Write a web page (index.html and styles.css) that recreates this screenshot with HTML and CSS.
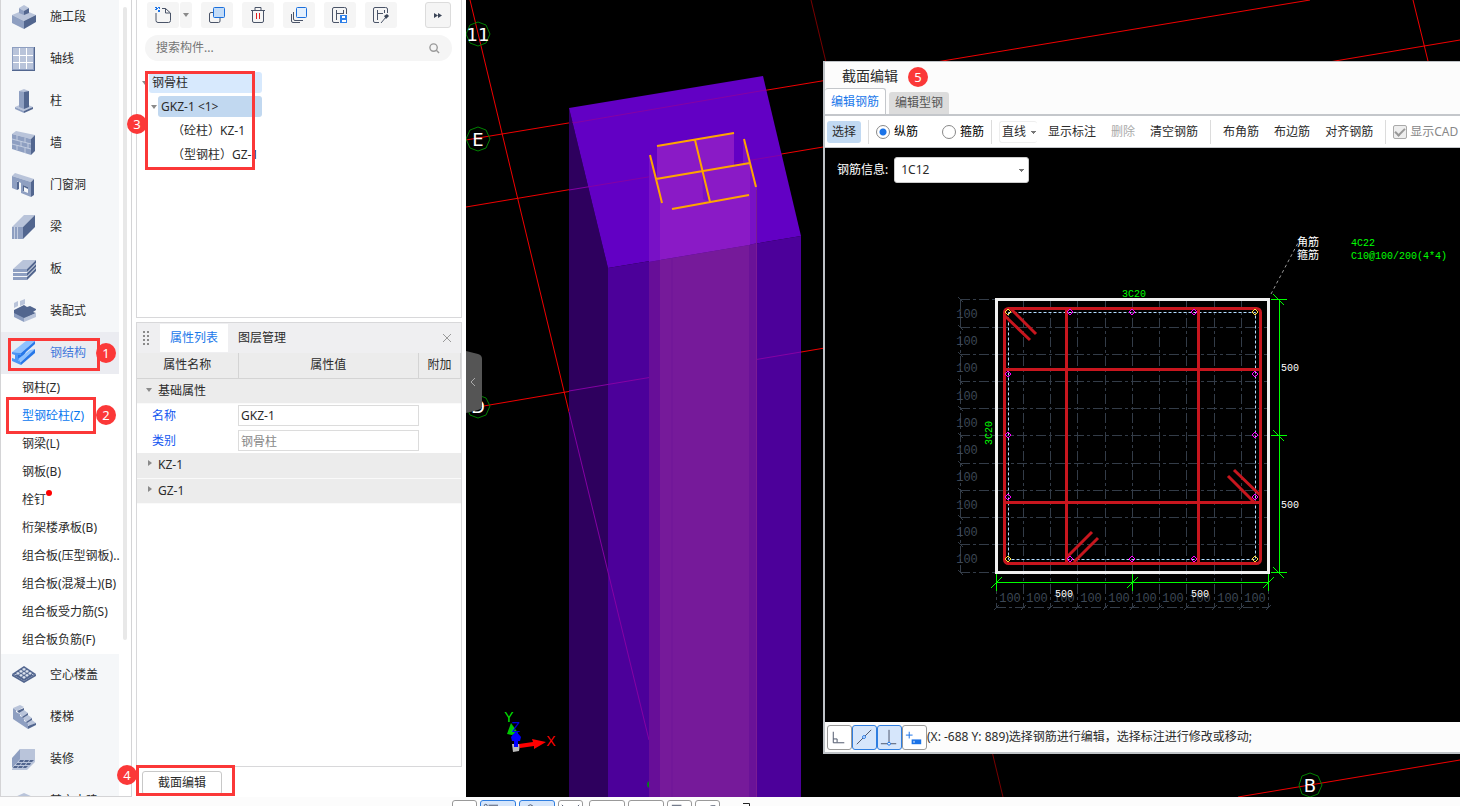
FILE: index.html
```html
<!DOCTYPE html>
<html lang="zh-CN">

<head>
    <meta charset="UTF-8">
    <meta name="viewport" content="width=device-width, initial-scale=1.0">
    <title>截面编辑</title>
    <link rel="stylesheet" href="styles.css">
</head>

<body>
    <div class="workspace">
        <!-- Component navigation -->
        <nav class="sidebar">
            <ul class="nav-list">
                <li><a class="nav-item" href="#">
                    <svg class="nav-icon" viewBox="0 0 24 24"><path class="lt" d="M0 10 12 5 24 10 12 16z"/><path class="md" d="M0 10 12 16V24L0 18z"/><path class="dk" d="M12 16 24 10V17L12 24z"/><path class="lt" d="M7 3 12 0 17 3 12 6z"/><path class="md" d="M7 3 12 6V10L7 8z"/><path class="dk" d="M12 6 17 3V8L12 10z"/></svg>
                    施工段</a></li>
                <li><a class="nav-item" href="#">
                    <svg class="nav-icon" viewBox="0 0 24 24"><path class="dk" d="M0 0H23V24H0z"/><path class="md" d="M0 0H22V23H0z"/><path class="lt" d="M1 1H21V22H1z"/><path class="grid-line" d="M7.500 1V22M14.500 1V22M1 8.500H21M1 15.500H21"/></svg>
                    轴线</a></li>
                <li><a class="nav-item" href="#">
                    <svg class="nav-icon" viewBox="0 0 24 24"><path class="lt" d="M3 18 12 14 21 18 12 22z"/><path class="md" d="M3 18 12 22V24L3 20z"/><path class="dk" d="M12 22 21 18V20L12 24z"/><path class="lt" d="M7 2 12 0 17 2 12 4z"/><path class="md" d="M7 2 12 3V20L7 18z"/><path class="dk" d="M12 3 17 2V18L12 20z"/></svg>
                    柱</a></li>
                <li><a class="nav-item" href="#">
                    <svg class="nav-icon" viewBox="0 0 24 24"><path class="lt" d="M0 3 4 0 23 4 19 8z"/><path class="md" d="M0 3 19 8V24L0 18z"/><path class="dk" d="M19 8 23 4V20L19 24z"/><path class="brick" d="M0 8 19 13M0 13 19 18M5 4V9M13 7V11M9 10V15M16 12V17M5 14V19M13 17V22"/></svg>
                    墙</a></li>
                <li><a class="nav-item" href="#">
                    <svg class="nav-icon" viewBox="0 0 24 24"><path class="lt" d="M0 3 3 0 22 6 19 9z"/><path class="dk" d="M19 9 22 6V22L19 24zM5 9 7 8V16L5 17z"/><path class="md" fill-rule="evenodd" d="M0 3 19 9V24L9 20V10L5 8V17L0 15zM11 12V18L16 20V14z"/><path class="dk" d="M11 12 16 14V16L12 14V18L11 18z"/></svg>
                    门窗洞</a></li>
                <li><a class="nav-item" href="#">
                    <svg class="nav-icon" viewBox="0 0 24 24"><path class="lt" d="M0 12 12 0H23L11 12z"/><path class="md" d="M0 12H11V24H0z"/><path class="dk" d="M11 12 23 0V12L11 24z"/><path class="brick" d="M2.500 12V24M5.500 12V24"/></svg>
                    梁</a></li>
                <li><a class="nav-item" href="#">
                    <svg class="nav-icon" viewBox="0 0 24 24"><path class="lt" d="M1 12 11 3H24L15 12z"/><path class="md" d="M1 12H15V15H1zM1 16H15V19H1zM1 20H15V23H1z"/><path class="dk" d="M15 12 24 3V6L15 15zM15 16 24 7V10L15 19zM15 20 24 11V14L15 23z"/></svg>
                    板</a></li>
                <li><a class="nav-item" href="#">
                    <svg class="nav-icon" viewBox="0 0 24 24"><path class="lt" d="M2 4 6 2V7L2 9zM8 2 13 0V5L8 7z"/><path class="dk" d="M2 11 12 6 15 8 18 7 24 10V11L21 13 24 14 12 20 2 15z"/><path class="md" d="M2 14 12 19V23L2 18z"/><path class="lt" d="M12 19 24 14V18L12 23z"/></svg>
                    装配式</a></li>
                <li>
                    <a class="nav-item nav-active" href="#">
                        <svg class="nav-icon" viewBox="0 0 24 24"><path fill="#8ec2ff" d="M0 11 14 0H23L9 12z"/><path fill="#2777e8" d="M9 12 23 0V3L14 11 8 20 5 18V14z"/><path fill="#4c95f5" d="M0 11 9 12V14L6 14V19L9 21V24L0 20V17L3 18V14L0 13z"/><path fill="#8ec2ff" d="M6 18 18 9 23 8 9 21z"/><path fill="#2777e8" d="M9 21 23 8V12L9 24z"/></svg>
                        钢结构</a>
                    <ul class="sub-list">
                        <li><a href="#">钢柱(Z)</a></li>
                        <li><a class="sub-active" href="#">型钢砼柱(Z)</a></li>
                        <li><a href="#">钢梁(L)</a></li>
                        <li><a href="#">钢板(B)</a></li>
                        <li><a class="has-dot" href="#">栓钉</a></li>
                        <li><a href="#">桁架楼承板(B)</a></li>
                        <li><a href="#">组合板(压型钢板)..</a></li>
                        <li><a href="#">组合板(混凝土)(B)</a></li>
                        <li><a href="#">组合板受力筋(S)</a></li>
                        <li><a href="#">组合板负筋(F)</a></li>
                    </ul>
                </li>
                <li><a class="nav-item" href="#">
                    <svg class="nav-icon" viewBox="0 0 24 24"><path class="dk" d="M0 11 12 18 24 11V13L12 20 0 13z"/><path class="dk" d="M0 11 12 3 24 11 12 18z"/><path fill="#dbe2ee" d="M12 5 14 6 12 8 10 6zM9 7 11 8 9 10 7 8zM15 7 17 8 15 10 13 8zM6 9 8 10 6 12 4 10zM12 9 14 10 12 12 10 10zM18 9 20 10 18 12 16 10zM4 11 5 12 4 12 2 11zM9 11 11 12 9 14 7 12zM15 11 17 12 15 14 13 12zM12 13 14 14 12 16 10 14zM20 11 22 11 20 12z"/></svg>
                    空心楼盖</a></li>
                <li><a class="nav-item" href="#">
                    <svg class="nav-icon" viewBox="0 0 24 24"><path class="md" d="M1 3 4 5V7L8 9V11L12 13V16L16 18V24L1 14z"/><path class="lt" d="M1 3 8 0 12 2 5 6zM7 8 12 5 16 8 10 12zM11 13 16 10 20 13 14 17zM15 18 20 15 24 18 17 21z"/><path class="dk" d="M5 6 12 3V5L7 8zM10 12 16 8V10L11 13zM14 17 20 13V15L15 18zM16 21 24 18V20L16 24z"/></svg>
                    楼梯</a></li>
                <li><a class="nav-item" href="#">
                    <svg class="nav-icon" viewBox="0 0 24 24"><path class="md" d="M0 11 8 2V13L0 21z"/><path class="lt" d="M8 2H23V13H8z"/><path class="lt" d="M0 22 8 12H23V15L15 23H0z"/><path class="dk" d="M8 13H12L11 15H7zM13 13H17L16 15H12zM18 13H22L20 15H17zM5 16H9L8 18H4zM10 16H14L13 18H9zM15 16H19L18 18H14zM2 19H6L5 21H1zM7 19H11L10 21H6zM12 19H16L14 21H11z"/></svg>
                    装修</a></li>
                <li><a class="nav-item" href="#">
                    <svg class="nav-icon" viewBox="0 0 24 24"><path class="lt" d="M3 8 12 4 21 8 12 12z"/><path class="md" d="M3 8 12 12V20L3 16z"/><path class="dk" d="M12 12 21 8V16L12 20z"/></svg>
                    其它土建</a></li>
            </ul>
            <div class="nav-scrollbar"></div>
        </nav>

        <!-- Component list and properties -->
        <section class="panels">
            <div class="panel component-panel">
                <div class="tools">
                    <div class="tool-split">
                        <button class="tool" title="新建"><svg viewBox="0 0 20 20"><path class="ink" d="M3 8V15.500Q3 17.500 5 17.500H15.500Q17.500 17.500 17.500 15.500V8L12.500 3.500H9M12.500 3.500V8H17"/><path fill="#1a73e8" d="M2 2h2v1h1v1H4v1H2V4h1V3H2zM5 2h2v2H6V3H5zM5 5h2v2H5z"/></svg></button>
                        <button class="tool-more" title="更多新建"><i class="arrow-down"></i></button>
                    </div>
                    <button class="tool" title="复制"><svg viewBox="0 0 20 20"><path class="ink" d="M6 7.500H4Q2.500 7.500 2.500 9V16Q2.500 17.500 4 17.500H11.500Q13 17.500 13 16V13"/><rect class="blue" x="6.500" y="2.500" width="11" height="10" rx="1"/></svg></button>
                    <button class="tool" title="删除"><svg viewBox="0 0 20 20"><path class="ink" d="M3 5.500H17M7 5V2.500H13V5M4.500 6V16Q4.500 17.500 6 17.500H14Q15.500 17.500 15.500 16V6"/><path d="M8.500 8V14M11.500 8V14" stroke="#e02020"/></svg></button>
                    <button class="tool" title="层间复制"><svg viewBox="0 0 20 20"><path class="ink" d="M4.500 7V14Q4.500 15.500 6 15.500H14M2.500 9V16Q2.500 17.500 4 17.500H11"/><rect class="blue pale" x="7.500" y="2.500" width="10" height="10" rx="1"/></svg></button>
                    <button class="tool" title="存档"><svg viewBox="0 0 20 20"><path class="ink" d="M9 17.500H4Q2.500 17.500 2.500 16V4Q2.500 2.500 4 2.500H14.500Q16.500 2.500 16.500 4V9M6.500 5V15M13.500 5V9M6.500 8.500H13"/><rect x="10" y="10" width="7" height="8" fill="#2f80e8"/><path d="M12 11H15V13H12zM12 15H16V17H12z" fill="#fff"/></svg></button>
                    <button class="tool" title="提取"><svg viewBox="0 0 20 20"><path class="ink" d="M8 17.500H4Q2.500 17.500 2.500 16V4Q2.500 2.500 4 2.500H14.500Q16.500 2.500 16.500 4V8M6.500 5V15M13.500 5V8M6.500 8.500H12M10 18 15 12"/><path d="M13 11 16 9 18 11 15 14z" fill="#3c4658"/></svg></button>
                    <button class="tool tool-expand" title="展开"><svg viewBox="0 0 20 20"><path d="M6 8 10 10.500 6 13zM10 8 14 10.500 10 13z" fill="#3c4658"/></svg></button>
                </div>
                <div class="search">
                    <input type="text" aria-label="搜索构件" placeholder="搜索构件...">
                    <svg viewBox="0 0 12 12"><circle cx="5" cy="5" r="4"/><path d="M8 8 11 11"/></svg>
                </div>
                <ul class="tree">
                    <li class="tree-row"><i class="arrow-down"></i><span class="node node-root">钢骨柱</span></li>
                    <li class="tree-row level-2"><i class="arrow-down"></i><span class="node node-selected">GKZ-1 &lt;1&gt;</span></li>
                    <li class="tree-row level-3"><span class="node">（砼柱）KZ-1</span></li>
                    <li class="tree-row level-3"><span class="node">（型钢柱）GZ-1</span></li>
                </ul>
            </div>

            <div class="panel property-panel">
                <div class="panel-tabs">
                    <svg class="grip" viewBox="0 0 6 14"><path d="M0 0h2v2H0zM4 0h2v2H4zM0 4h2v2H0zM4 4h2v2H4zM0 8h2v2H0zM4 8h2v2H4zM0 12h2v2H0zM4 12h2v2H4z"/></svg>
                    <button class="panel-tab current">属性列表</button>
                    <button class="panel-tab">图层管理</button>
                    <button class="panel-close" title="关闭"><svg viewBox="0 0 10 10"><path d="M1 1 9 9M9 1 1 9"/></svg></button>
                </div>
                <table class="props">
                    <colgroup><col class="col-name"><col><col class="col-extra"></colgroup>
                    <thead>
                        <tr><th>属性名称</th><th>属性值</th><th>附加</th></tr>
                    </thead>
                    <tbody>
                        <tr class="group"><td colspan="3"><i class="arrow-down"></i>基础属性</td></tr>
                        <tr><td><label for="propName">名称</label></td><td><input id="propName" type="text" value="GKZ-1"></td><td></td></tr>
                        <tr><td><label for="propType">类别</label></td><td><input id="propType" type="text" value="钢骨柱" disabled></td><td></td></tr>
                        <tr class="group"><td colspan="3"><i class="arrow-right"></i>KZ-1</td></tr>
                        <tr class="group"><td colspan="3"><i class="arrow-right"></i>GZ-1</td></tr>
                    </tbody>
                </table>
            </div>
            <div class="panel-footer">
                <button class="section-btn">截面编辑</button>
            </div>
        </section>

        <!-- 3D view -->
        <main class="viewport">
            <svg class="scene" viewBox="466 0 994 797" preserveAspectRatio="xMinYMin slice">
                <g class="axis">
                    <path d="M470 0 569 412M466 140 1310 0M466 207 1460 40M466 409 1460 240M1413 0 1428 61M1238 797 1460 760"/>
                    <path class="axis-dim" d="M811 0 1003 797"/>
                </g>
                <g class="bubble">
                    <path d="M478 22 486 25 490 34 486 43 478 46 470 43 466 34 470 25zM478 127 486 130 490 139 486 148 478 151 470 148 466 139 470 130zM478 395 486 398 490 406 486 415 478 418 470 415 466 406 470 398zM1310 773 1318 776 1322 785 1318 794 1310 797 1302 794 1299 785 1302 776z"/>
                    <text x="478" y="41">11</text>
                    <text x="478" y="146">E</text>
                    <text x="478" y="413">D</text>
                    <text x="1310" y="792">B</text>
                </g>
                <path fill="#2e005e" d="M569 108 608 268V797H569z"/>
                <path fill="#4c009a" d="M608 268 801 236V797H608z"/>
                <path fill="#6200c4" d="M569 108 763 76 801 236 608 268z"/>
                <path class="axis-under" d="M573 123 766 90M569 190 782 155M569 391 801 352M569 412 649 740"/>
                <path fill="#7811c6" d="M649 155 657 180 661 203V260L649 262zM743 140 757 187V243L749 245V170L743 165z"/>
                <path fill="#8a1ac6" d="M657 146 734 133V166L750 164V245L660 260V200L657 185z"/>
                <path fill="#7811c6" d="M695 140 702 167 703 199 710 202 695 140zM734 165 743 163V165L734 167z"/>
                <path fill="#670e98" d="M649 262 660 260V797H649z"/>
                <path fill="#761a9a" d="M660 260 749 245V797H660z"/>
                <path fill="#6a1298" d="M749 245 757 243V797H749z"/>
                <path fill="none" stroke="#6f1598" d="M672 258V797"/>
                <path fill="none" stroke="#7a1c94" d="M756.500 190V797"/>
                <path class="steel" d="M657 146 734 133M656 179 750 163M672 209 749 195M650 155 662 203M744 139 756 187M695 140 710 202"/>
                <path fill="#067a20" d="M649 781V788L647 786V783z"/>
                <path fill="#555" d="M466 351 478 354Q482 355 482 359V405Q482 409 478 410L466 413z"/>
                <path class="collapse-mark" d="M475 378 471 382 475 386"/>
                <g class="compass">
                    <path fill="#00c800" d="M507 734 511 723 518 733 512 735z"/>
                    <path fill="#bbb" d="M512 744H520L519 751 513 752z"/>
                    <path fill="#f00" d="M519 744 533 742 532 739 546 742 534 749 534 746 520 748z"/>
                    <path fill="#0000ff" d="M511 737 516 731 521 737 520 741H518V747H514V741H512z"/>
                    <text x="509" y="722" fill="#00e800">Y</text>
                    <text x="516" y="732" fill="#0000e0">Z</text>
                    <text x="551" y="746" fill="#f00">X</text>
                </g>
            </svg>

            <!-- Section editor -->
            <div class="editor" role="dialog" aria-labelledby="editorTitle">
                <h1 class="editor-title" id="editorTitle">截面编辑</h1>
                <div class="editor-tabs">
                    <button class="editor-tab current">编辑钢筋</button>
                    <button class="editor-tab">编辑型钢</button>
                </div>
                <div class="editor-tools">
                    <button class="text-btn picked">选择</button>
                    <span class="divider"></span>
                    <label class="choice"><input type="radio" name="barType" checked>纵筋</label>
                    <label class="choice choice-last"><input type="radio" name="barType">箍筋</label>
                    <span class="divider"></span>
                    <select class="line-select" aria-label="线型"><option>直线</option></select>
                    <button class="text-btn">显示标注</button>
                    <button class="text-btn" disabled>删除</button>
                    <button class="text-btn">清空钢筋</button>
                    <span class="divider"></span>
                    <button class="text-btn">布角筋</button>
                    <button class="text-btn">布边筋</button>
                    <button class="text-btn">对齐钢筋</button>
                    <span class="divider"></span>
                    <label class="choice cad"><input type="checkbox" checked disabled>显示CAD</label>
                </div>
                <div class="drawing">
                    <svg class="section" viewBox="825 148 635 574" preserveAspectRatio="xMinYMin slice">
                        <g class="grid">
                            <path d="M996.500 299V608M1023.500 299V608M1050.500 299V608M1077.500 299V608M1105.500 299V608M1132.500 299V608M1159.500 299V608M1186.500 299V608M1214.500 299V608M1241.500 299V608M1268.500 299V608"/>
                            <path d="M960 299.500H1268M960 327.500H1268M960 354.500H1268M960 381.500H1268M960 408.500H1268M960 435.500H1268M960 463.500H1268M960 490.500H1268M960 517.500H1268M960 544.500H1268M960 572.500H1268M960.500 299V573M996 607.500H1268"/>
                            <path class="ticks" d="M958 297l5 5M958 325l5 5M958 352l5 5M958 379l5 5M958 406l5 5M958 433l5 5M958 461l5 5M958 488l5 5M958 515l5 5M958 542l5 5M958 570l5 5M994 610l5-5M1021 610l5-5M1048 610l5-5M1075 610l5-5M1103 610l5-5M1130 610l5-5M1157 610l5-5M1184 610l5-5M1212 610l5-5M1239 610l5-5M1266 610l5-5"/>
                            <g class="grid-text">
                                <text x="967" y="318">100</text><text x="967" y="345">100</text><text x="967" y="372">100</text><text x="967" y="400">100</text><text x="967" y="427">100</text><text x="967" y="454">100</text><text x="967" y="481">100</text><text x="967" y="509">100</text><text x="967" y="536">100</text><text x="967" y="563">100</text>
                                <text x="1010" y="602">100</text><text x="1037" y="602">100</text><text x="1064" y="602">100</text><text x="1091" y="602">100</text><text x="1119" y="602">100</text><text x="1146" y="602">100</text><text x="1173" y="602">100</text><text x="1200" y="602">100</text><text x="1228" y="602">100</text><text x="1255" y="602">100</text>
                            </g>
                        </g>
                        <rect class="concrete" x="996.500" y="299.500" width="272" height="273"/>
                        <rect class="cover" x="1008.500" y="312.500" width="247" height="247"/>
                        <g class="stirrup">
                            <rect x="1004.500" y="308.500" width="256" height="255" rx="4"/>
                            <path d="M1066.500 309V563M1198.500 309V563M1005 369.500H1260M1005 502.500H1260"/>
                            <path class="hook" d="M1011 309 1036 334M1005 316 1030 340M1066 558 1092 532M1074 562 1098 538M1234 470 1260 495M1228 476 1254 502"/>
                        </g>
                        <path class="bar" d="M1067 312l3-3 3 3-3 3zM1129 312l3-3 3 3-3 3zM1191 312l3-3 3 3-3 3zM1067 559l3-3 3 3-3 3zM1129 559l3-3 3 3-3 3zM1191 559l3-3 3 3-3 3zM1005 374l3-3 3 3-3 3zM1005 435l3-3 3 3-3 3zM1005 497l3-3 3 3-3 3zM1252 374l3-3 3 3-3 3zM1252 435l3-3 3 3-3 3zM1252 497l3-3 3 3-3 3z"/>
                        <path class="bar corner" d="M1005 312l3-3 3 3-3 3zM1252 312l3-3 3 3-3 3zM1005 559l3-3 3 3-3 3zM1252 559l3-3 3 3-3 3z"/>
                        <g class="dims">
                            <path d="M1279.500 299V573M1271 299.500H1287M1271 435.500H1287M1271 572.500H1287M1273 294 1284 305M1273 430 1284 441M1273 567 1284 578"/>
                            <path d="M996 582.500H1269M996.500 574V591M1132.500 574V591M1268.500 574V591M991 588 1002 577M1127 588 1138 577M1263 588 1274 577"/>
                        </g>
                        <path class="leader" d="M1271 294 1299 241"/>
                        <g class="notes">
                            <text x="1281" y="371">500</text><text x="1281" y="508">500</text>
                            <text x="1055" y="597">500</text><text x="1191" y="597">500</text>
                            <text class="cn" x="1297" y="246">角筋</text><text class="cn" x="1297" y="259">箍筋</text>
                            <text class="green" x="1351" y="246">4C22</text><text class="green" x="1351" y="259">C10@100/200(4*4)</text>
                            <text class="green" x="1122" y="297">3C20</text>
                            <text class="green" transform="translate(992 445) rotate(-90)">3C20</text>
                        </g>
                    </svg>
                    <div class="bar-info">
                        <label for="barInfo">钢筋信息:</label>
                        <select id="barInfo"><option>1C12</option></select>
                    </div>
                </div>
                <div class="editor-status">
                    <button class="snap" title="正交"><svg viewBox="0 0 24 24"><path d="M5.500 6V17.500H17M5.500 13.500H9.500V17"/></svg></button>
                    <button class="snap on" title="对象捕捉"><svg viewBox="0 0 24 24"><path d="M4 19 19 4"/><circle cx="11.500" cy="11.500" r="1.500"/></svg></button>
                    <button class="snap on" title="垂点"><svg viewBox="0 0 24 24"><path d="M3 18.500H19M11.500 4V17"/><circle cx="11.500" cy="18.500" r="1.500"/></svg></button>
                    <button class="snap" title="动态输入"><svg viewBox="0 0 24 24"><path d="M3 9.500H10M6.500 6V13" stroke="#1a73e8"/><path d="M9 14H19V19H9z" fill="#1a73e8" stroke="none"/><path d="M11.500 15.500V17.500" stroke="#fff"/></svg></button>
                    <span>(X: -688 Y: 889)选择钢筋进行编辑，选择标注进行修改或移动;</span>
                </div>
                <span class="badge badge-5">5</span>
            </div>
        </main>

        <!-- Step markers -->
        <div class="mark mark-1"></div><span class="badge badge-1">1</span>
        <div class="mark mark-2"></div><span class="badge badge-2">2</span>
        <div class="mark mark-3"></div><span class="badge badge-3">3</span>
        <div class="mark mark-4"></div><span class="badge badge-4">4</span>
    </div>

    <footer class="statusbar">
        <button class="st-btn" aria-label="菜单"></button>
        <button class="st-btn long on" aria-label="捕捉"><svg viewBox="0 0 36 8"><circle cx="5" cy="5" r="1.500"/><path d="M8 4.500H18"/></svg></button>
        <button class="st-btn long on" aria-label="动态"><svg viewBox="0 0 36 8"><path d="M8 8Q8 4 11 4T14 8"/></svg></button>
        <button class="st-btn" aria-label="交点"><svg viewBox="0 0 24 8"><path d="M3 4 7 8M21 4 17 8"/></svg></button>
        <button class="st-btn long spaced" aria-label="垂点"></button>
        <button class="st-btn long" aria-label="中点"></button>
        <button class="st-btn" aria-label="顶点"><svg viewBox="0 0 24 8"><path d="M4 4.500H14"/></svg></button>
        <button class="st-btn" aria-label="坐标"><svg viewBox="0 0 24 8"><path d="M10 8 16 5H20V8"/></svg></button>
        <svg class="st-mark" viewBox="0 0 8 5"><path d="M0 1.500H6.500V4"/></svg>
    </footer>
</body>

</html>
```

FILE: styles.css
```css
* {
    box-sizing: border-box;
}

body {
    margin: 0;
    height: 100vh;
    display: flex;
    flex-direction: column;
    overflow: hidden;
    background-color: #fcfcfc;
    color: #2b2b2b;
    font-family: "Noto Sans", "Noto Sans CJK SC", sans-serif;
    font-size: 12px;
    line-height: 16px;
}

ul {
    list-style: none;
    margin: 0;
    padding: 0;
}

a {
    color: inherit;
    text-decoration: none;
}

button,
input,
select {
    font: inherit;
    color: inherit;
    margin: 0;
    padding: 0;
    border: none;
    background: none;
}

svg {
    display: block;
}

.workspace {
    flex: 1;
    min-height: 0;
    display: flex;
    position: relative;
    background-color: white;
}

/* Sidebar */
.sidebar {
    width: 132px;
    display: flex;
    justify-content: space-between;
    padding-right: 4px;
    border: 1px solid #d4d4d6;
    border-top: none;
    overflow: hidden;
    flex-shrink: 0;
}

.nav-list {
    width: 118px;
    margin-top: -4px;
}

.nav-item {
    display: flex;
    align-items: center;
    gap: 14px;
    height: 42px;
    padding-left: 11px;
    background-color: #f5f7f9;
}

.nav-item:hover,
.nav-active {
    background-color: #ebecf1;
}

.nav-active {
    color: #3f78dc;
}

.nav-icon {
    width: 24px;
    height: 24px;
}

.lt {
    fill: #b9c4da;
}

.md {
    fill: #8e9fc1;
}

.dk {
    fill: #52668f;
}

.grid-line {
    stroke: white;
}

.brick {
    fill: none;
    stroke: #c3cde0;
}

.sub-list a {
    display: block;
    height: 28px;
    padding-left: 21px;
    line-height: 28px;
    white-space: nowrap;
}

.sub-list .sub-active {
    color: #0a78f0;
}

.has-dot::after {
    content: "";
    display: inline-block;
    width: 6px;
    height: 6px;
    border-radius: 50%;
    background-color: red;
    vertical-align: 8px;
}

.nav-scrollbar {
    width: 4px;
    height: 633px;
    margin-top: 7px;
    border-radius: 2px;
    background-color: #e8e8e8;
}

/* Middle panels */
.panels {
    width: 334px;
    padding: 0 4px;
    display: flex;
    flex-direction: column;
    gap: 4px;
    flex-shrink: 0;
}

.panel {
    border: 1px solid #d8d8da;
}

.component-panel {
    height: 318px;
    border-top: none;
    padding: 2px 9px 0 9px;
}

.tools {
    display: flex;
    gap: 9px;
    padding: 0 1px;
}

.tool,
.tool-more {
    height: 26px;
    background-color: #f5f5f5;
    border-radius: 3px;
}

.tool {
    width: 32px;
    display: flex;
    align-items: center;
    justify-content: center;
}

.tool svg {
    width: 20px;
    height: 20px;
}

.tool-split {
    display: flex;
    gap: 1px;
}

.tool-more {
    width: 12px;
    display: flex;
    align-items: center;
    justify-content: center;
}

.tool-expand {
    width: 26px;
    margin-left: auto;
    border: 1px solid #dcdcdc;
}

.ink {
    fill: none;
    stroke: #4a5468;
}

.blue {
    fill: #c3dcf8;
    stroke: #1a6fdc;
}

.pale {
    fill: #e4f0fd;
}

.arrow-down {
    border: 3px solid transparent;
    border-top: 4px solid #8a8a8a;
    border-bottom: none;
}

.arrow-right {
    border: 3px solid transparent;
    border-left: 4px solid #8a8a8a;
    border-right: none;
}

.search {
    display: flex;
    align-items: center;
    height: 26px;
    margin: 7px 0 11px -1px;
    padding: 0 12px 0 11px;
    border-radius: 13px;
    background-color: #f5f5f5;
}

.search input {
    flex: 1;
    min-width: 0;
    outline: none;
}

.search input::placeholder {
    color: #757575;
}

.search svg {
    width: 11px;
    height: 11px;
    fill: none;
    stroke: #9a9a9a;
    stroke-width: 1.5;
}

.tree {
    width: 120px;
    margin-left: -4px;
}

.tree-row {
    display: flex;
    align-items: center;
    gap: 1px;
    height: 21px;
    margin-bottom: 3px;
}

.level-2 {
    padding-left: 9px;
}

.level-3 {
    padding-left: 28px;
}

.node {
    flex: 1;
    height: 21px;
    padding-left: 3px;
    border-radius: 3px;
    line-height: 21px;
    white-space: nowrap;
}

.level-3 .node {
    padding-left: 2px;
}

.node-root {
    background-color: #d7e9fd;
}

.node-selected {
    background-color: #c1d8f0;
}

.property-panel {
    flex: 1;
}

.panel-tabs {
    display: flex;
    align-items: center;
    height: 30px;
    padding-left: 6px;
    background-color: #efeff1;
}

.grip {
    width: 6px;
    height: 14px;
    margin-right: 11px;
    fill: #8a8a8a;
}

.panel-tab {
    height: 28px;
    padding: 0 10px;
}

.panel-tab.current {
    background-color: white;
    color: #1a78ea;
}

.panel-close {
    margin-left: auto;
    padding: 9px;
}

.panel-close svg {
    width: 10px;
    height: 10px;
    stroke: #999;
}

.props {
    width: 100%;
    table-layout: fixed;
    border-collapse: collapse;
}

.col-name {
    width: 101px;
}

.col-extra {
    width: 42px;
}

.props th,
.props td {
    height: 25px;
    padding: 0;
    text-align: left;
}

.props th {
    background-color: #ececec;
    border-right: 1px solid #d4d4d4;
    border-bottom: 1px solid #d4d4d4;
    font-weight: normal;
    text-align: center;
}

.props .group td {
    padding-left: 9px;
    background-color: #ececec;
    border-bottom: 1px solid #fafafa;
}

.props i {
    display: inline-block;
    margin-right: 6px;
    vertical-align: 3px;
}

.props .arrow-right {
    margin-left: 2px;
}

.props label {
    padding-left: 15px;
    color: #1457f0;
}

.props input {
    display: block;
    width: 100%;
    height: 21px;
    padding: 0 2px;
    border: 1px solid #dcdcdc;
    background-color: white;
}

.props input:disabled {
    color: #888;
}

.panel-footer {
    height: 26px;
    padding-left: 6px;
}

.section-btn {
    width: 80px;
    height: 24px;
    border: 1px solid #c8c8c8;
    border-radius: 3px;
    background-color: white;
}

/* 3D view */
.viewport {
    flex: 1;
    min-width: 0;
    position: relative;
    background-color: black;
    overflow: hidden;
}

.scene,
.section {
    position: absolute;
    left: 0;
    top: 0;
    width: 100%;
    height: 100%;
}

.axis path {
    fill: none;
    stroke: #f00000;
}

.axis .axis-dim {
    stroke: #780000;
}

.axis-under {
    fill: none;
    stroke: #8600a4;
}

.bubble path {
    fill: none;
    stroke: #008000;
}

.bubble text {
    fill: white;
    font-family: "DejaVu Sans", sans-serif;
    font-size: 18px;
    text-anchor: middle;
}

.steel {
    fill: none;
    stroke: #ffa500;
    stroke-width: 2;
}

.collapse-mark {
    fill: none;
    stroke: #aaa;
}

.compass text {
    font-family: "Liberation Sans", sans-serif;
    font-size: 14px;
    text-anchor: middle;
}

/* Section editor window */
.editor {
    position: absolute;
    left: 357px;
    right: 0;
    top: 61px;
    bottom: 43px;
    display: flex;
    flex-direction: column;
    background-color: #fcfcfc;
    border: 1px solid #bfc3c7;
    border-left-width: 2px;
    border-right: none;
    border-bottom-width: 2px;
}

.editor-title {
    margin: 0;
    padding: 4px 17px 2px;
    font-size: 14px;
    font-weight: normal;
    line-height: 20px;
}

.editor-tabs {
    display: flex;
    align-items: flex-end;
    gap: 3px;
    border-bottom: 2px solid #c4c7cb;
}

.editor-tab {
    height: 22px;
    padding: 0 6px;
    border-radius: 3px 3px 0 0;
    background-color: #dcdcdc;
    color: #555;
}

.editor-tab.current {
    height: 26px;
    border: 1px solid #c4c7cb;
    border-left: none;
    border-bottom: none;
    background-color: white;
    color: #1a78ea;
}

.editor-tools {
    display: flex;
    align-items: center;
    height: 32px;
    padding-left: 2px;
    border-bottom: 1px solid #c4c7cb;
    background-color: white;
    white-space: nowrap;
    overflow: hidden;
}

.editor-tools > * {
    flex-shrink: 0;
}

.text-btn {
    height: 22px;
    padding: 0 5px;
    margin-right: 5px;
    border-radius: 3px;
}

.text-btn:disabled {
    color: #aaa;
}

.text-btn.picked {
    background-color: #c1d9f2;
}

.divider {
    width: 1px;
    height: 24px;
    margin-right: 7px;
    margin-left: 2px;
    background-color: #dcdcdc;
}

.choice {
    display: flex;
    align-items: center;
    gap: 4px;
    margin-right: 24px;
    color: black;
}

.choice-last {
    margin-right: 5px;
}

.choice input {
    appearance: none;
    width: 14px;
    height: 14px;
    border: 1px solid #888;
    border-radius: 50%;
}

.choice input:checked {
    background: radial-gradient(circle, #1a73e8 3px, white 4px);
}

.cad {
    gap: 3px;
    color: #888;
}

.cad input {
    display: grid;
    place-items: center;
    border-color: #aaa;
    border-radius: 2px;
}

.cad input:checked {
    background: #eee;
}

.cad input::after {
    content: "";
    width: 4px;
    height: 8px;
    margin-bottom: 2px;
    border: solid #999;
    border-width: 0 2px 2px 0;
    transform: rotate(45deg);
}

.line-select,
.bar-info select {
    appearance: none;
    background-image: linear-gradient(45deg, transparent 50%, #777 50%), linear-gradient(-45deg, transparent 50%, #777 50%);
    background-repeat: no-repeat;
    background-size: 3px 3px;
}

.line-select {
    width: 38px;
    height: 22px;
    padding-left: 2px;
    margin-right: 6px;
    border: 1px solid #eee;
    border-right: none;
    border-radius: 3px;
    background-position: 31px 9px, 34px 9px;
}

.drawing {
    flex: 1;
    position: relative;
    background-color: black;
    overflow: hidden;
}

.bar-info {
    position: relative;
    display: flex;
    align-items: center;
    gap: 6px;
    padding: 9px 12px;
    color: white;
}

.bar-info select {
    width: 135px;
    height: 26px;
    padding-left: 6px;
    border: 1px solid #ccc;
    border-radius: 3px;
    background-color: white;
    background-position: 123px 11px, 126px 11px;
    color: #2b2b2b;
}

.section path,
.section rect {
    fill: none;
}

.grid path {
    stroke: #333c48;
    stroke-dasharray: 10 3 3 3;
}

.grid .ticks {
    stroke-dasharray: none;
}

.grid-text,
.notes {
    font-family: "Liberation Mono", "Noto Sans CJK SC", monospace;
}

.grid-text {
    fill: #3d4855;
    font-size: 12px;
    text-anchor: middle;
}

.concrete {
    stroke: #f0f0f0;
    stroke-width: 3;
}

.cover {
    stroke: #b4dcff;
    stroke-dasharray: 3 2;
}

.stirrup {
    stroke: #c8161e;
    stroke-width: 3;
}

.bar {
    stroke: #ff00ff;
}

.corner {
    stroke: #ffe040;
}

.dims {
    stroke: #00ff00;
}

.leader {
    stroke: #999;
    stroke-dasharray: 3 3;
}

.notes {
    fill: white;
    font-size: 10px;
}

.notes .cn {
    font-size: 11px;
}

.notes .green {
    fill: #00ff00;
}

.editor-status {
    display: flex;
    align-items: center;
    height: 30px;
    padding-left: 2px;
    white-space: nowrap;
}

.snap {
    width: 25px;
    height: 25px;
    border: 1px solid #999;
    border-radius: 3px;
    background-color: white;
}

.snap.on {
    border-color: #2f7ee0;
    background-color: #d6e6fb;
}

.snap svg {
    fill: none;
    stroke: #4a5468;
}

.snap circle {
    fill: white;
    stroke: #1a73e8;
}

/* Step markers */
.mark {
    position: absolute;
    border: 3px solid #fb3838;
}

.badge {
    position: absolute;
    width: 20px;
    height: 20px;
    border-radius: 50%;
    background-color: #fb3838;
    color: white;
    font-size: 13px;
    line-height: 20px;
    text-align: center;
}

.mark-1 {
    left: 8px;
    top: 338px;
    width: 92px;
    height: 33px;
}

.badge-1 {
    left: 96px;
    top: 343px;
}

.mark-2 {
    left: 6px;
    top: 397px;
    width: 90px;
    height: 37px;
}

.badge-2 {
    left: 96px;
    top: 405px;
}

.mark-3 {
    left: 145px;
    top: 71px;
    width: 110px;
    height: 99px;
}

.badge-3 {
    left: 127px;
    top: 114px;
}

.mark-4 {
    left: 136px;
    bottom: 1px;
    width: 99px;
    height: 31px;
}

.badge-4 {
    left: 117px;
    bottom: 12px;
}

.badge-5 {
    left: 83px;
    top: 5px;
}

/* Bottom bar */
.statusbar {
    display: flex;
    gap: 3px;
    height: 9px;
    padding: 3px 0 0 452px;
    overflow: hidden;
}

.st-btn {
    width: 25px;
    height: 24px;
    border: 1px solid #999;
    border-radius: 3px;
    background-color: white;
    display: flex;
    align-items: flex-start;
}

.st-btn.long {
    width: 36px;
}

.st-btn.on {
    border-color: #2f7ee0;
    background-color: #d6e6fb;
}

.st-btn.spaced {
    margin-left: 3px;
}

.statusbar svg {
    width: 100%;
    fill: none;
    stroke: #4a5468;
}

.statusbar .st-mark {
    width: 8px;
    height: 5px;
    margin: 2px 0 0 20px;
    stroke: #222;
}
```
